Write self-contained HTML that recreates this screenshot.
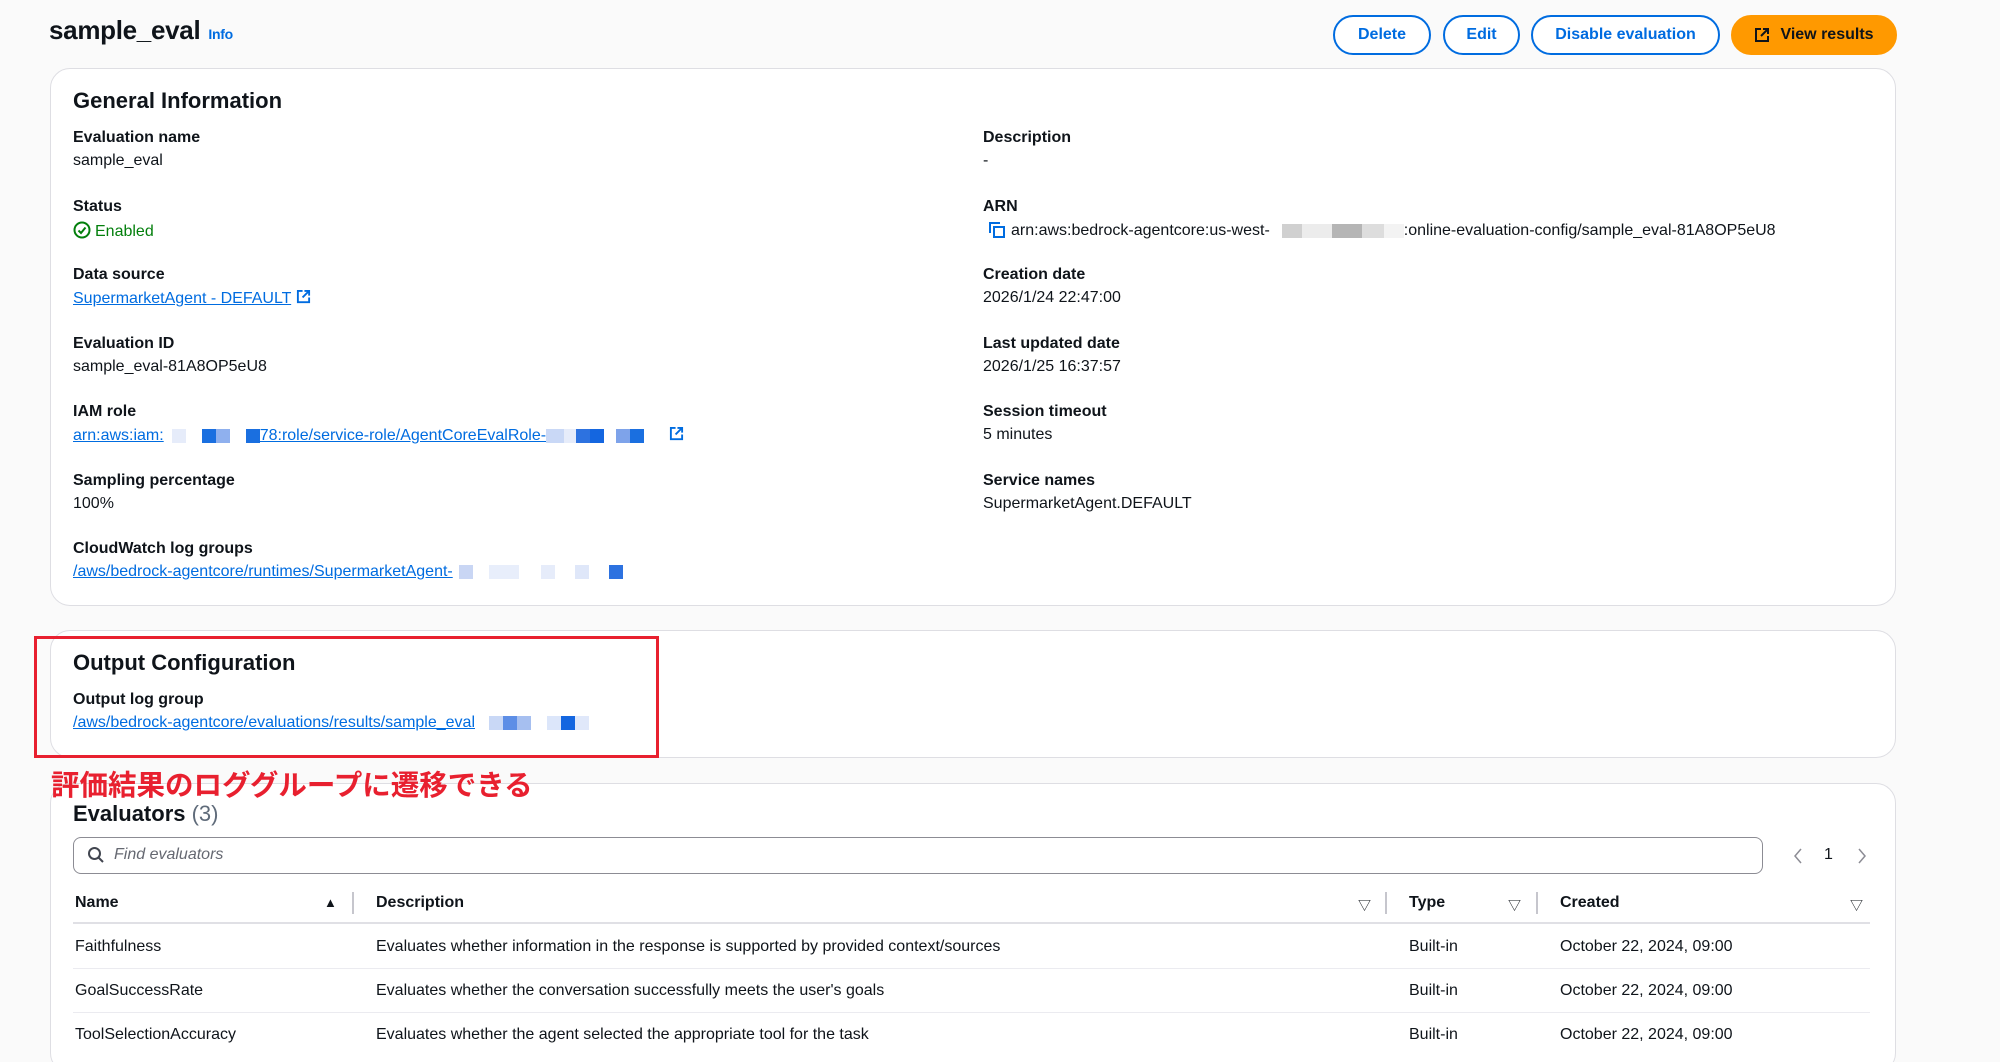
<!DOCTYPE html>
<html><head><meta charset="utf-8"><style>
*{box-sizing:border-box;margin:0;padding:0}
html{width:2000px;height:1062px;overflow:hidden}
body{width:2000px;height:1062px;overflow:hidden;background:#fafafa;font-family:"Liberation Sans","Noto Sans CJK JP",sans-serif;color:#0f141a;position:relative;font-size:16px}
.a{position:absolute;white-space:nowrap}
h1{position:absolute;left:49px;top:15px;font-size:26px;font-weight:bold;letter-spacing:-0.3px}
.info{font-size:14px;color:#006ce0;font-weight:bold;margin-left:8px}
.btn{position:absolute;top:15px;height:40px;border:2px solid #006ce0;border-radius:20px;color:#006ce0;font-weight:bold;font-size:16px;display:flex;align-items:center;justify-content:center;background:#fff}
.card{position:absolute;left:50px;width:1846px;background:#fff;border:1px solid #dedee3;border-radius:20px}
.h2{font-size:22px;font-weight:bold}
.lb{font-weight:bold;font-size:16px}
.lk{color:#006ce0;text-decoration:underline}
.blk{display:inline-block;width:14px;height:14px;vertical-align:middle}
.th{font-weight:bold;font-size:16px;color:#0f141a}
.dv{position:absolute;width:2px;height:22px;background:#c6c6cd}
.hl{position:absolute;left:73px;width:1797px;height:1px;background:#ebebf0}
</style></head><body>
<h1>sample_eval<span class="info">Info</span></h1>
<div class="btn" style="left:1333px;width:98px">Delete</div>
<div class="btn" style="left:1443px;width:77px">Edit</div>
<div class="btn" style="left:1531px;width:189px">Disable evaluation</div>
<div class="btn" style="left:1731px;width:166px;background:#ff9900;border-color:#ff9900;color:#0f141a"><svg width="16" height="16" viewBox="0 0 16 16" style="margin-right:10px" fill="none" stroke="#0f141a" stroke-width="2"><path d="M7 2H2v12h12V9"/><path d="M9 2h5v5M14 2L7 9"/></svg>View results</div>

<div class="card" style="top:68px;height:538px"></div>
<div class="a h2" style="left:73px;top:88px">General Information</div>

<div class="a lb" style="left:73px;top:129px">Evaluation name</div>
<div class="a" style="left:73px;top:152px">sample_eval</div>
<div class="a lb" style="left:73px;top:198px">Status</div>
<div class="a" style="left:73px;top:221px;color:#037f0c"><svg width="18" height="18" viewBox="0 0 18 18" style="vertical-align:-3px;margin-right:4px" fill="none" stroke="#037f0c" stroke-width="2"><circle cx="9" cy="9" r="7.5"/><path d="M5.5 9.5l2.5 2.5 4.5-5.5"/></svg>Enabled</div>
<div class="a lb" style="left:73px;top:266px">Data source</div>
<div class="a" style="left:73px;top:289px"><span class="lk">SupermarketAgent - DEFAULT</span> <svg width="15" height="15" viewBox="0 0 16 16" fill="none" stroke="#006ce0" stroke-width="2" style="vertical-align:-1px"><path d="M7 2H2v12h12V9"/><path d="M9 2h5v5M14 2L7 9"/></svg></div>
<div class="a lb" style="left:73px;top:335px">Evaluation ID</div>
<div class="a" style="left:73px;top:358px">sample_eval-81A8OP5eU8</div>
<div class="a lb" style="left:73px;top:403px">IAM role</div>
<div class="a" style="left:73px;top:426px"><span class="lk">arn:aws:iam:</span><span class="blk" style="background:#e6ecfa;margin-left:8px"></span><span class="blk" style="background:#fff;width:16px"></span><span class="blk" style="background:#1a6fe0"></span><span class="blk" style="background:#8fb0ee"></span><span class="blk" style="background:#fff;width:16px"></span><span class="blk" style="background:#1a6fe0"></span><span class="lk">78:role/service-role/AgentCoreEvalRole-</span><span class="blk" style="background:#c9d8f6;width:18px"></span><span class="blk" style="background:#e6ecfa;width:12px"></span><span class="blk" style="background:#2d72e0"></span><span class="blk" style="background:#1466e0"></span><span class="blk" style="background:#fff;width:12px"></span><span class="blk" style="background:#7ea3ea"></span><span class="blk" style="background:#1a6fe0"></span> <svg width="15" height="15" viewBox="0 0 16 16" fill="none" stroke="#006ce0" stroke-width="2" style="vertical-align:-1px;margin-left:20px"><path d="M7 2H2v12h12V9"/><path d="M9 2h5v5M14 2L7 9"/></svg></div>
<div class="a lb" style="left:73px;top:472px">Sampling percentage</div>
<div class="a" style="left:73px;top:495px">100%</div>
<div class="a lb" style="left:73px;top:540px">CloudWatch log groups</div>
<div class="a" style="left:73px;top:563px"><span class="lk">/aws/bedrock-agentcore/runtimes/SupermarketAgent-</span><span class="blk" style="background:#fff;width:6px"></span><span class="blk" style="background:#c9d6f4"></span><span class="blk" style="background:#fff;width:16px"></span><span class="blk" style="background:#e8eefb;width:30px"></span><span class="blk" style="background:#fff;width:22px"></span><span class="blk" style="background:#e6ecfa"></span><span class="blk" style="background:#fff;width:20px"></span><span class="blk" style="background:#dfe7f9"></span><span class="blk" style="background:#fff;width:20px"></span><span class="blk" style="background:#2d72e0"></span></div>

<div class="a lb" style="left:983px;top:129px">Description</div>
<div class="a" style="left:983px;top:152px">-</div>
<div class="a lb" style="left:983px;top:198px">ARN</div>
<div class="a" style="left:988px;top:221px"><svg width="18" height="18" viewBox="0 0 18 18" fill="none" stroke="#006ce0" stroke-width="2" style="vertical-align:-4px;margin-right:5px"><path d="M2 12V2h10"/><rect x="6" y="6" width="10" height="10"/></svg>arn:aws:bedrock-agentcore:us-west-<span class="blk" style="background:#d0d0d0;width:20px;margin-left:12px"></span><span class="blk" style="background:#ececec;width:30px"></span><span class="blk" style="background:#b5b5b5;width:30px"></span><span class="blk" style="background:#ddd;width:22px"></span><span class="blk" style="background:#f3f3f3;width:20px"></span>:online-evaluation-config/sample_eval-81A8OP5eU8</div>
<div class="a lb" style="left:983px;top:266px">Creation date</div>
<div class="a" style="left:983px;top:289px">2026/1/24 22:47:00</div>
<div class="a lb" style="left:983px;top:335px">Last updated date</div>
<div class="a" style="left:983px;top:358px">2026/1/25 16:37:57</div>
<div class="a lb" style="left:983px;top:403px">Session timeout</div>
<div class="a" style="left:983px;top:426px">5 minutes</div>
<div class="a lb" style="left:983px;top:472px">Service names</div>
<div class="a" style="left:983px;top:495px">SupermarketAgent.DEFAULT</div>

<div class="card" style="top:630px;height:128px"></div>
<div class="a" style="left:34px;top:636px;width:625px;height:122px;border:3px solid #e8202f"></div>
<div class="a h2" style="left:73px;top:650px">Output Configuration</div>
<div class="a lb" style="left:73px;top:691px">Output log group</div>
<div class="a" style="left:73px;top:714px"><span class="lk">/aws/bedrock-agentcore/evaluations/results/sample_eval</span><span class="blk" style="background:#fff;width:14px"></span><span class="blk" style="background:#c9d8f6"></span><span class="blk" style="background:#5d8ee6"></span><span class="blk" style="background:#a6bff0"></span><span class="blk" style="background:#fff;width:16px"></span><span class="blk" style="background:#dce6fa"></span><span class="blk" style="background:#1466e0"></span><span class="blk" style="background:#e0e8fa"></span></div>
<div class="a" style="left:51px;top:763px;font-size:28.5px;font-weight:bold;color:#e8202f;z-index:3">評価結果のロググループに遷移できる</div>

<div class="card" style="top:783px;height:290px"></div>
<div class="a h2" style="left:73px;top:801px">Evaluators <span style="font-weight:normal;color:#5f6b7a">(3)</span></div>
<div class="a" style="left:73px;top:837px;width:1690px;height:37px;border:1px solid #8c8c94;border-radius:8px"></div>
<svg class="a" style="left:87px;top:846px" width="18" height="18" viewBox="0 0 18 18" fill="none" stroke="#424650" stroke-width="2"><circle cx="7.5" cy="7.5" r="5.5"/><path d="M11.5 11.5L16 16"/></svg>
<div class="a" style="left:114px;top:846px;font-style:italic;color:#656871">Find evaluators</div>
<svg class="a" style="left:1792px;top:847px" width="12" height="18" viewBox="0 0 12 18" fill="none" stroke="#8c8c94" stroke-width="1.5"><path d="M9 2L3 9l6 7"/></svg>
<div class="a" style="left:1824px;top:846px">1</div>
<svg class="a" style="left:1856px;top:847px" width="12" height="18" viewBox="0 0 12 18" fill="none" stroke="#8c8c94" stroke-width="1.5"><path d="M3 2l6 7-6 7"/></svg>

<div class="a th" style="left:75px;top:894px">Name</div>
<div class="a" style="left:324px;top:895px;font-size:13px">&#9650;</div>
<div class="dv" style="left:352px;top:892px"></div>
<div class="a th" style="left:376px;top:894px">Description</div>
<div class="a" style="left:1358px;top:895px;font-size:13px">&#9661;</div>
<div class="dv" style="left:1385px;top:892px"></div>
<div class="a th" style="left:1409px;top:894px">Type</div>
<div class="a" style="left:1508px;top:895px;font-size:13px">&#9661;</div>
<div class="dv" style="left:1536px;top:892px"></div>
<div class="a th" style="left:1560px;top:894px">Created</div>
<div class="a" style="left:1850px;top:895px;font-size:13px">&#9661;</div>
<div class="hl" style="top:922px;height:2px;background:#e0e0e5"></div>

<div class="a" style="left:75px;top:938px">Faithfulness</div>
<div class="a" style="left:376px;top:938px">Evaluates whether information in the response is supported by provided context/sources</div>
<div class="a" style="left:1409px;top:938px">Built-in</div>
<div class="a" style="left:1560px;top:938px">October 22, 2024, 09:00</div>
<div class="hl" style="top:968px"></div>
<div class="a" style="left:75px;top:982px">GoalSuccessRate</div>
<div class="a" style="left:376px;top:982px">Evaluates whether the conversation successfully meets the user's goals</div>
<div class="a" style="left:1409px;top:982px">Built-in</div>
<div class="a" style="left:1560px;top:982px">October 22, 2024, 09:00</div>
<div class="hl" style="top:1012px"></div>
<div class="a" style="left:75px;top:1026px">ToolSelectionAccuracy</div>
<div class="a" style="left:376px;top:1026px">Evaluates whether the agent selected the appropriate tool for the task</div>
<div class="a" style="left:1409px;top:1026px">Built-in</div>
<div class="a" style="left:1560px;top:1026px">October 22, 2024, 09:00</div>
</body></html>
